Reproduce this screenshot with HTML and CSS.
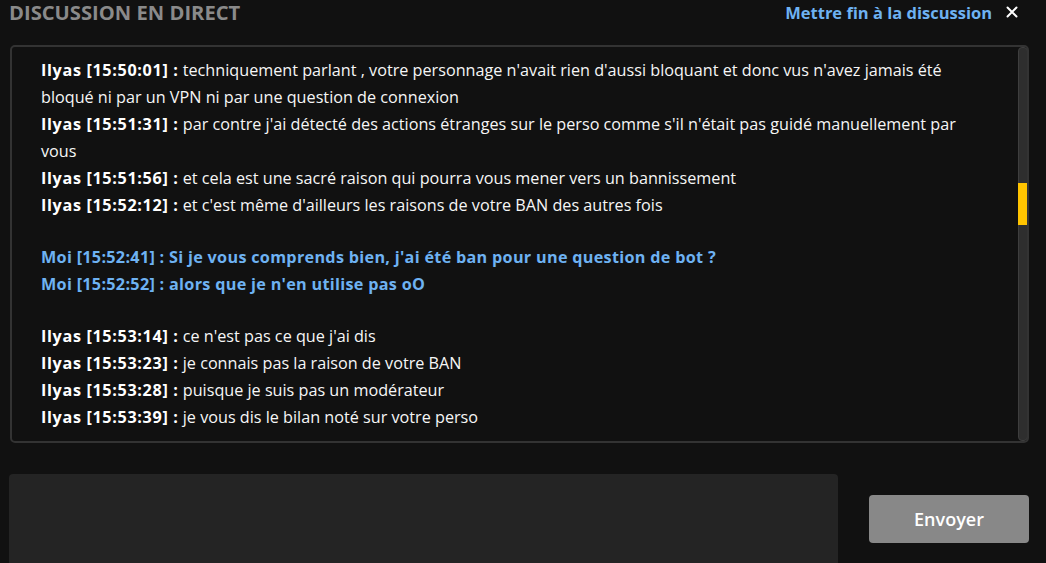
FILE: index.html
```html
<!DOCTYPE html>
<html lang="fr">
<head>
<meta charset="utf-8">
<link rel="stylesheet" href="styles.css">
</head>
<body>
<div class="page">
  <header class="header">
    <h1 class="title">DISCUSSION EN DIRECT</h1>
    <div class="header-actions">
      <a class="end-link">Mettre fin à la discussion</a>
      <span class="close">
        <svg width="12" height="12" viewBox="0 0 12 12"><path d="M1.5 1.5 L10.5 10.5 M10.5 1.5 L1.5 10.5" stroke="#fff" stroke-width="2" stroke-linecap="round"/></svg>
      </span>
    </div>
  </header>

  <section class="chat">
    <div class="messages">
      <div class="group">
        <p class="msg"><b>Ilyas [15:50:01] :</b> techniquement parlant , votre personnage n'avait rien d'aussi bloquant et donc vus n'avez jamais été bloqué ni par un VPN ni par une question de connexion</p>
        <p class="msg"><b>Ilyas [15:51:31] :</b> par contre j'ai détecté des actions étranges sur le perso comme s'il n'était pas guidé manuellement par vous</p>
        <p class="msg"><b>Ilyas [15:51:56] :</b> et cela est une sacré raison qui pourra vous mener vers un bannissement</p>
        <p class="msg"><b>Ilyas [15:52:12] :</b> et c'est même d'ailleurs les raisons de votre BAN des autres fois</p>
      </div>
      <div class="group me">
        <p class="msg">Moi [15:52:41] : Si je vous comprends bien, j'ai été ban pour une question de bot ?</p>
        <p class="msg">Moi [15:52:52] : alors que je n'en utilise pas oO</p>
      </div>
      <div class="group">
        <p class="msg"><b>Ilyas [15:53:14] :</b> ce n'est pas ce que j'ai dis</p>
        <p class="msg"><b>Ilyas [15:53:23] :</b> je connais pas la raison de votre BAN</p>
        <p class="msg"><b>Ilyas [15:53:28] :</b> puisque je suis pas un modérateur</p>
        <p class="msg"><b>Ilyas [15:53:39] :</b> je vous dis le bilan noté sur votre perso</p>
      </div>
    </div>
    <div class="scrollbar"><div class="thumb"></div></div>
  </section>

  <footer class="composer">
    <div class="input"></div>
    <button class="send">Envoyer</button>
  </footer>
</div>
</body>
</html>
```

FILE: styles.css
```css
* { box-sizing: border-box; }
html, body {
  margin: 0;
  padding: 0;
  background: #111111;
  height: 100%;
  overflow: hidden;
}
body {
  font-family: "Open Sans", "Noto Sans", sans-serif;
  color: #ffffff;
}
.page {
  padding: 0 18px 0 9px;
}
.header {
  display: flex;
  justify-content: space-between;
  align-items: center;
  height: 24px;
  margin-bottom: 21px;
}
.title {
  margin: 0;
  font-size: 20.2px;
  font-weight: 700;
  color: #8a8a8a;
  line-height: 24px;
}
.header-actions {
  display: flex;
  align-items: center;
  gap: 14px;
}
.end-link {
  font-size: 16.5px;
  font-weight: 700;
  color: #6eb2f2;
}
.close {
  display: flex;
  width: 12px;
  height: 12px;
  margin-right: 10px;
}
.chat {
  margin-left: 1px;
  margin-right: -1px;
  height: 398px;
  border: 2px solid #333333;
  border-radius: 5px;
  display: flex;
  overflow: hidden;
}
.messages {
  flex: 1;
  padding: 10px 23px 0 29px;
}
.group + .group {
  margin-top: 25px;
}
.msg {
  margin: 0;
  font-size: 16.2px;
  line-height: 27px;
  color: #f6f6f6;
}
.msg b {
  font-weight: 700;
  color: #ffffff;
  letter-spacing: 0.65px;
}
.me .msg {
  font-weight: 700;
  color: #6eb2f2;
  letter-spacing: 0.3px;
}
.scrollbar {
  width: 10px;
  margin: 0 -1px 0 0;
  background: #2e2e2e;
  border: 1px solid #3e3e3e;
  border-radius: 4px;
  position: relative;
}
.thumb {
  position: absolute;
  left: -1px;
  right: 0;
  top: 135px;
  height: 42px;
  background: #ffc400;
}
.composer {
  display: flex;
  align-items: flex-start;
  margin-top: 31px;
}
.input {
  flex: 0 0 829px;
  height: 100px;
  background: #242424;
  border-radius: 4px;
}
.send {
  flex: 0 0 160px;
  margin-left: 31px;
  margin-top: 21px;
  height: 48px;
  background: #888888;
  border: none;
  border-radius: 4px;
  color: #ffffff;
  font-family: "Open Sans", "Noto Sans", sans-serif;
  font-size: 18px;
  font-weight: 600;
}
```
